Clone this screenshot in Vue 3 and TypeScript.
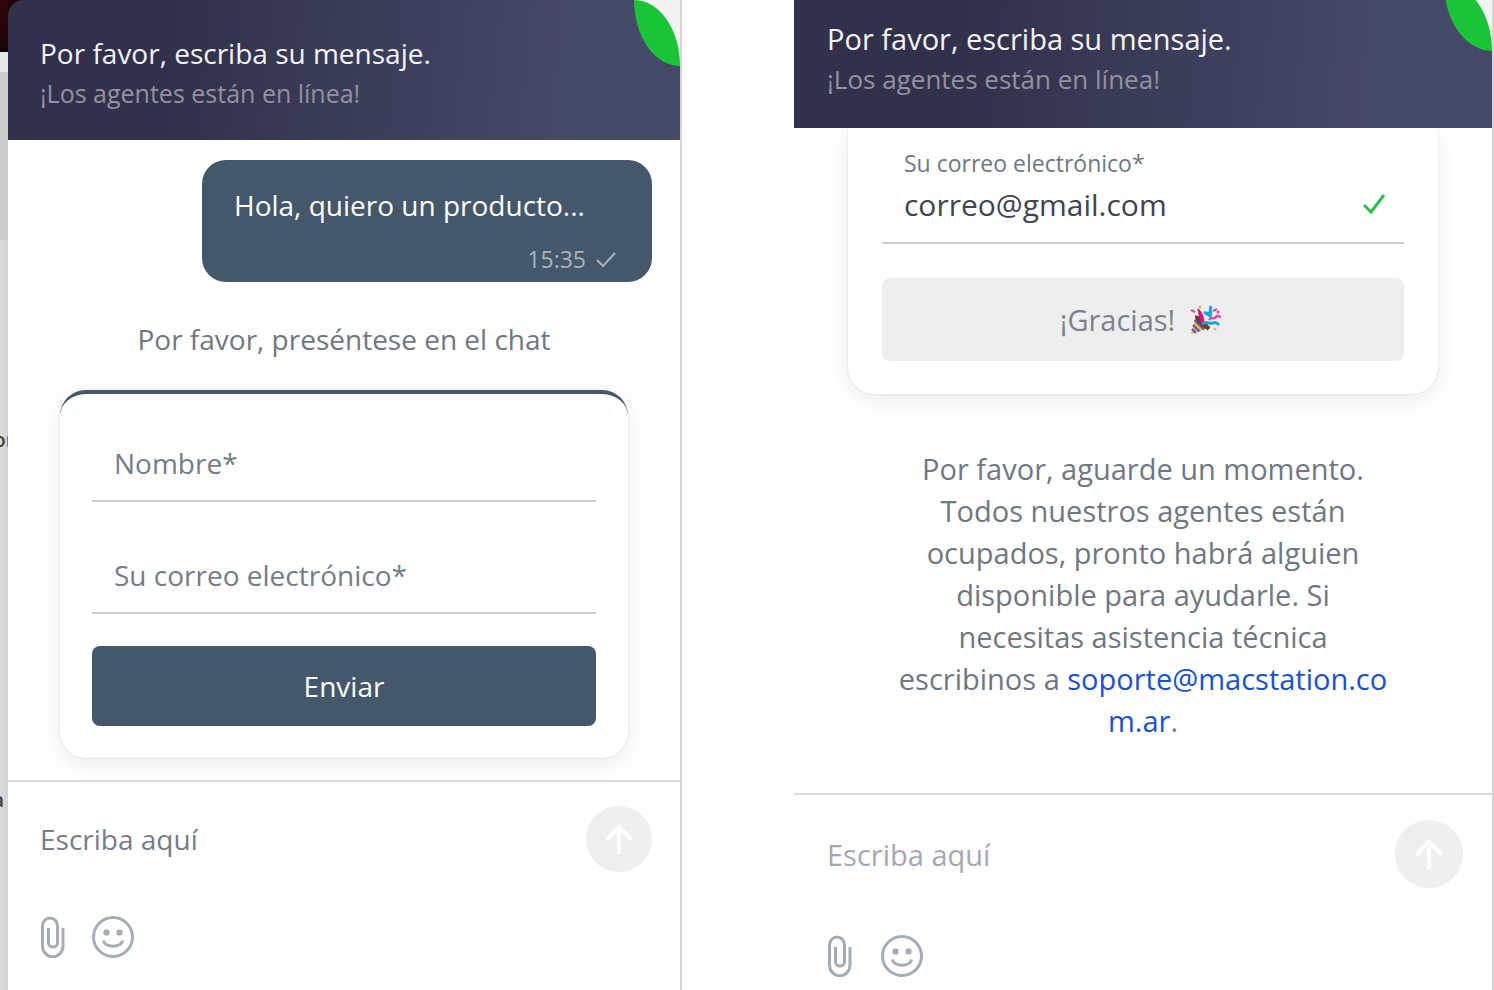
<script setup lang="ts">
import { ref } from 'vue'

const greeting = 'Por favor, escriba su mensaje.'
const status = '¡Los agentes están en línea!'
const name = ref('')
const email = ref('')
const sentEmail = ref('correo@gmail.com')
const drafts = ref(['', ''])
const waitLines = [
  'Por favor, aguarde un momento.',
  'Todos nuestros agentes están',
  'ocupados, pronto habrá alguien',
  'disponible para ayudarle. Si',
  'necesitas asistencia técnica',
]
</script>

<template>
  <main class="page">
    <aside class="backdrop" aria-hidden="true">
      <div class="backdrop-hero"></div>
      <div class="backdrop-bar"></div>
      <div class="backdrop-photo"></div>
      <div class="backdrop-text"><span>or</span></div>
      <div class="backdrop-text second"><span>a</span></div>
    </aside>

    <section class="panel">
      <header class="head-wrap">
        <div class="head rounded">
          <h1>{{ greeting }}</h1>
          <p>{{ status }}</p>
        </div>
        <span class="corner"><span class="leaf"></span></span>
      </header>
      <div class="chat">
        <article class="bubble">
          <p>Hola, quiero un producto...</p>
          <footer>
            <time>15:35</time>
            <svg viewBox="0 0 22 18" width="22" height="18"><path d="M2 10l6 6L20 3" /></svg>
          </footer>
        </article>
        <p class="intro">Por favor, preséntese en el chat</p>
        <form class="card top-line" @submit.prevent>
          <input v-model="name" type="text" placeholder="Nombre*" aria-label="Nombre" />
          <input v-model="email" type="email" placeholder="Su correo electrónico*" aria-label="Su correo electrónico" />
          <button type="submit">Enviar</button>
        </form>
      </div>
      <footer class="composer">
        <div class="write">
          <input v-model="drafts[0]" type="text" placeholder="Escriba aquí" aria-label="Escriba aquí" />
          <button class="send" type="button" aria-label="Enviar mensaje">
            <svg viewBox="0 0 66 66"><path d="M33 48V21M20.500 34L33 21l12.500 13" /></svg>
          </button>
        </div>
        <div class="tools">
          <button type="button" aria-label="Adjuntar archivo">
            <svg class="clip" viewBox="0 0 24 42"><path d="M22 12V30a10 10.500 0 0 1-20.500 0V10a7.500 8 0 0 1 15 0v17a4.500 4 0 0 1-9 0V12" /></svg>
          </button>
          <button type="button" aria-label="Emojis">
            <svg class="smile" viewBox="0 0 42 42"><circle cx="21" cy="21" r="19.500" /><path d="M11.500 24.500c1 7.500 18 7.500 19 0" /><rect x="11.500" y="13.500" width="6" height="6" rx="2" /><rect x="24.500" y="13.500" width="6" height="6" rx="2" /></svg>
          </button>
        </div>
      </footer>
    </section>

    <section class="panel large">
      <header class="head-wrap">
        <div class="head">
          <h1>{{ greeting }}</h1>
          <p>{{ status }}</p>
        </div>
        <span class="corner"><span class="leaf"></span></span>
      </header>
      <div class="chat">
        <form class="card" @submit.prevent>
          <div class="filled">
            <label for="sent-email">Su correo electrónico*</label>
            <div class="value">
              <input id="sent-email" v-model="sentEmail" type="email" />
              <svg viewBox="0 0 24 22" width="24" height="22"><path d="M2 12l7 7L22 2" /></svg>
            </div>
          </div>
          <button class="thanks" type="button">
            ¡Gracias!
            <svg class="party" viewBox="0 0 32 30">
              <path d="M7 11l12 12L2 29z" fill="#efb54a" />
              <path d="M5.500 15l9.500 9.500M4 20l6.500 6.500M3 24l4 4" stroke="#5f5ba8" stroke-width="2.200" />
              <path d="M6 11c3-3 15 9 13 13C15 25 5 15 6 11z" fill="#6b3d2e" />
              <path d="M12 17c-2-4-1-8-3-13 4 4 6 9 5 14z" fill="#d3157d" stroke="#d3157d" stroke-width="1.500" />
              <path d="M15 7l6 4c2-3-1-5 1-10M21 10l-3-3" fill="none" stroke="#1ca6e0" stroke-width="3" />
              <path d="M13 19c4-3 8 0 11-1s4 0 6 2" fill="none" stroke="#1ca6e0" stroke-width="3" />
              <path d="M20 15c3-4 5 0 7-3s3 0 5 0M24 6l4-2M2 5l4 2" fill="none" stroke="#ea4ba0" stroke-width="2.500" />
              <path d="M16 20l4 4" stroke="#6b3d2e" stroke-width="4" />
              <circle cx="11" cy="2" r="1.500" fill="#efb54a" /><circle cx="26" cy="24" r="1.500" fill="#efb54a" /><circle cx="29" cy="7" r="1.500" fill="#ea4ba0" />
            </svg>
          </button>
        </form>
        <p class="wait">
          <template v-for="line in waitLines" :key="line">{{ line }}<br /></template>
          escribinos a <a href="mailto:soporte@macstation.com.ar">soporte@macstation.co<br />m.ar</a>.
        </p>
      </div>
      <footer class="composer">
        <div class="write">
          <input v-model="drafts[1]" type="text" placeholder="Escriba aquí" aria-label="Escriba aquí" />
          <button class="send" type="button" aria-label="Enviar mensaje">
            <svg viewBox="0 0 66 66"><path d="M33 48V21M20.500 34L33 21l12.500 13" /></svg>
          </button>
        </div>
        <div class="tools">
          <button type="button" aria-label="Adjuntar archivo">
            <svg class="clip" viewBox="0 0 24 42"><path d="M22 12V30a10 10.500 0 0 1-20.500 0V10a7.500 8 0 0 1 15 0v17a4.500 4 0 0 1-9 0V12" /></svg>
          </button>
          <button type="button" aria-label="Emojis">
            <svg class="smile" viewBox="0 0 42 42"><circle cx="21" cy="21" r="19.500" /><path d="M11.500 24.500c1 7.500 18 7.500 19 0" /><rect x="11.500" y="13.500" width="6" height="6" rx="2" /><rect x="24.500" y="13.500" width="6" height="6" rx="2" /></svg>
          </button>
        </div>
      </footer>
    </section>
  </main>
</template>

<style>
body {
  margin: 0;
  background: #fff;
}
</style>

<style scoped>
* {
  box-sizing: border-box;
}
.page {
  display: grid;
  grid-template-columns: 8px 674fr 112px 700fr;
  min-height: 100vh;
  overflow: hidden;
  font-family: 'Open Sans', 'Noto Sans', sans-serif;
  color: #6f7782;
}
h1,
p {
  margin: 0;
  font-weight: 400;
}
button,
input {
  font: inherit;
  border: 0;
  padding: 0;
  background: none;
  color: inherit;
  min-width: 0;
}
button {
  cursor: pointer;
}
input {
  outline: 0;
}
svg {
  fill: none;
  stroke: currentColor;
}
.backdrop {
  display: flex;
  flex-direction: column;
  overflow: hidden;
  background: linear-gradient(90deg, #dcdcdc, #d2d2d2);
}
.backdrop-hero {
  height: 52px;
  background: linear-gradient(#34060c, #160406);
}
.backdrop-bar {
  height: 20px;
  background: #e8e8e8;
}
.backdrop-photo {
  height: 168px;
  background: #cbcbcb;
}
.backdrop-text {
  height: 360px;
  padding-top: 186px;
  font-size: 20px;
  line-height: 28px;
  font-weight: 600;
  color: #444;
  display: flex;
  justify-content: center;
}
.second {
  justify-content: flex-end;
  padding-right: 4px;
}
.panel {
  --text: 28px;
  --small: 25px;
  --line: 42px;
  --send: 66px;
  grid-column: 2;
  display: flex;
  flex-direction: column;
  min-width: 0;
  background: #fff;
  border-right: 2px solid #d4d4d6;
  font-size: var(--text);
  line-height: var(--line);
}
.large {
  --text: 29px;
  --small: 26px;
  --send: 68px;
  grid-column: 4;
}
.head-wrap {
  position: relative;
  overflow: hidden;
  background: #1d060b;
}
.head {
  height: 140px;
  padding: 32px;
  background: linear-gradient(96deg, #32314c 25%, #444967 82%);
  color: #f4f4f7;
}
.rounded {
  border-top-left-radius: 16px;
}
.large .head {
  height: 128px;
  padding: 18px 33px;
}
.head h1 {
  font-size: var(--text);
  line-height: 42px;
}
.head p {
  font-size: var(--small);
  line-height: 38px;
  color: #91919f;
}
.corner {
  position: absolute;
  top: 0;
  right: 0;
  width: 46px;
  height: 66px;
  background: linear-gradient(to top right, #444967 50%, #f3f3f3 50%);
}
.large .corner {
  top: -17px;
  width: 48px;
  height: 68px;
}
.leaf {
  display: block;
  height: 100%;
  background: #1ac338;
  border-radius: 0 100% 0 100%;
}
.chat {
  display: flex;
  flex-direction: column;
  padding: 20px 28px 22px 52px;
}
.bubble {
  align-self: flex-end;
  min-width: 450px;
  height: 122px;
  padding: 24px 35px 6px 32px;
  border-radius: 24px;
  background: #45576a;
  color: #fff;
}
.bubble footer {
  display: flex;
  justify-content: flex-end;
  align-items: center;
  gap: 9px;
  padding-top: 16px;
  line-height: 34px;
  font-size: 23px;
  color: #aab3bd;
}
.bubble svg {
  stroke-width: 2;
}
.intro {
  margin: 36px 24px 30px 0;
  text-align: center;
}
.card {
  display: flex;
  flex-direction: column;
  margin-right: 24px;
  padding: 32px;
  border-radius: 26px;
  background: #fff;
  box-shadow: 0 0 2px rgba(0, 0, 0, 0.16), 0 6px 24px rgba(0, 0, 0, 0.08);
}
.top-line {
  border-top: 4px solid #45576a;
}
.top-line input {
  height: 76px;
  padding: 0 22px;
  border-bottom: 2px solid #cbcbcb;
}
.top-line input + input {
  margin-top: 36px;
}
.card button {
  height: 80px;
  margin-top: 32px;
  border-radius: 8px;
  background: #45576a;
  color: #fff;
}
::placeholder {
  color: #757d88;
  opacity: 1;
}
.large ::placeholder {
  color: #a3a9b3;
}
.large .chat {
  padding: 0 54px 51px;
}
.large .card {
  margin-right: 0;
  padding: 16px 34px 33px;
  border-radius: 0 0 26px 26px;
  clip-path: inset(0 -40px -40px);
}
.filled {
  display: flex;
  flex-direction: column;
  height: 100px;
  padding: 0 18px 16px 22px;
  border-bottom: 2px solid #c9cbcd;
}
.filled label {
  font-size: 23px;
  line-height: 38px;
}
.value {
  display: flex;
  align-items: center;
}
.filled input {
  flex: 1;
  height: 44px;
  font-size: 30px;
  color: #3f454d;
}
.filled svg {
  color: #2bbf4b;
  stroke-width: 3;
}
.card .thanks {
  display: flex;
  align-items: center;
  justify-content: center;
  gap: 14px;
  height: 83px;
  margin-top: 34px;
  padding-right: 5px;
  background: #eee;
  color: #7b838d;
}
.party {
  width: 32px;
  height: 30px;
  stroke: none;
}
.wait {
  margin-top: 54px;
  text-align: center;
  white-space: nowrap;
}
.wait a {
  color: #1a51cf;
  text-decoration: none;
}
.composer {
  flex: 1;
  padding: 24px 28px 32px 32px;
  border-top: 2px solid #d9dade;
}
.large .composer {
  padding: 25px 29px 0 33px;
}
.write {
  display: flex;
  align-items: center;
}
.write input {
  flex: 1;
  height: var(--send);
}
.send {
  width: var(--send);
  height: var(--send);
  border-radius: 50%;
  background: #efefef;
  color: #fff;
}
.send svg {
  display: block;
  stroke-width: 4;
}
.tools {
  display: flex;
  gap: 27px;
  margin-top: 44px;
  padding-left: 1px;
  color: #a6abb8;
}
.large .tools {
  gap: 29px;
  margin-top: 47px;
}
.tools svg {
  display: block;
  height: 42px;
  stroke-width: 3;
}
.smile rect {
  fill: currentColor;
  stroke: none;
}
</style>
